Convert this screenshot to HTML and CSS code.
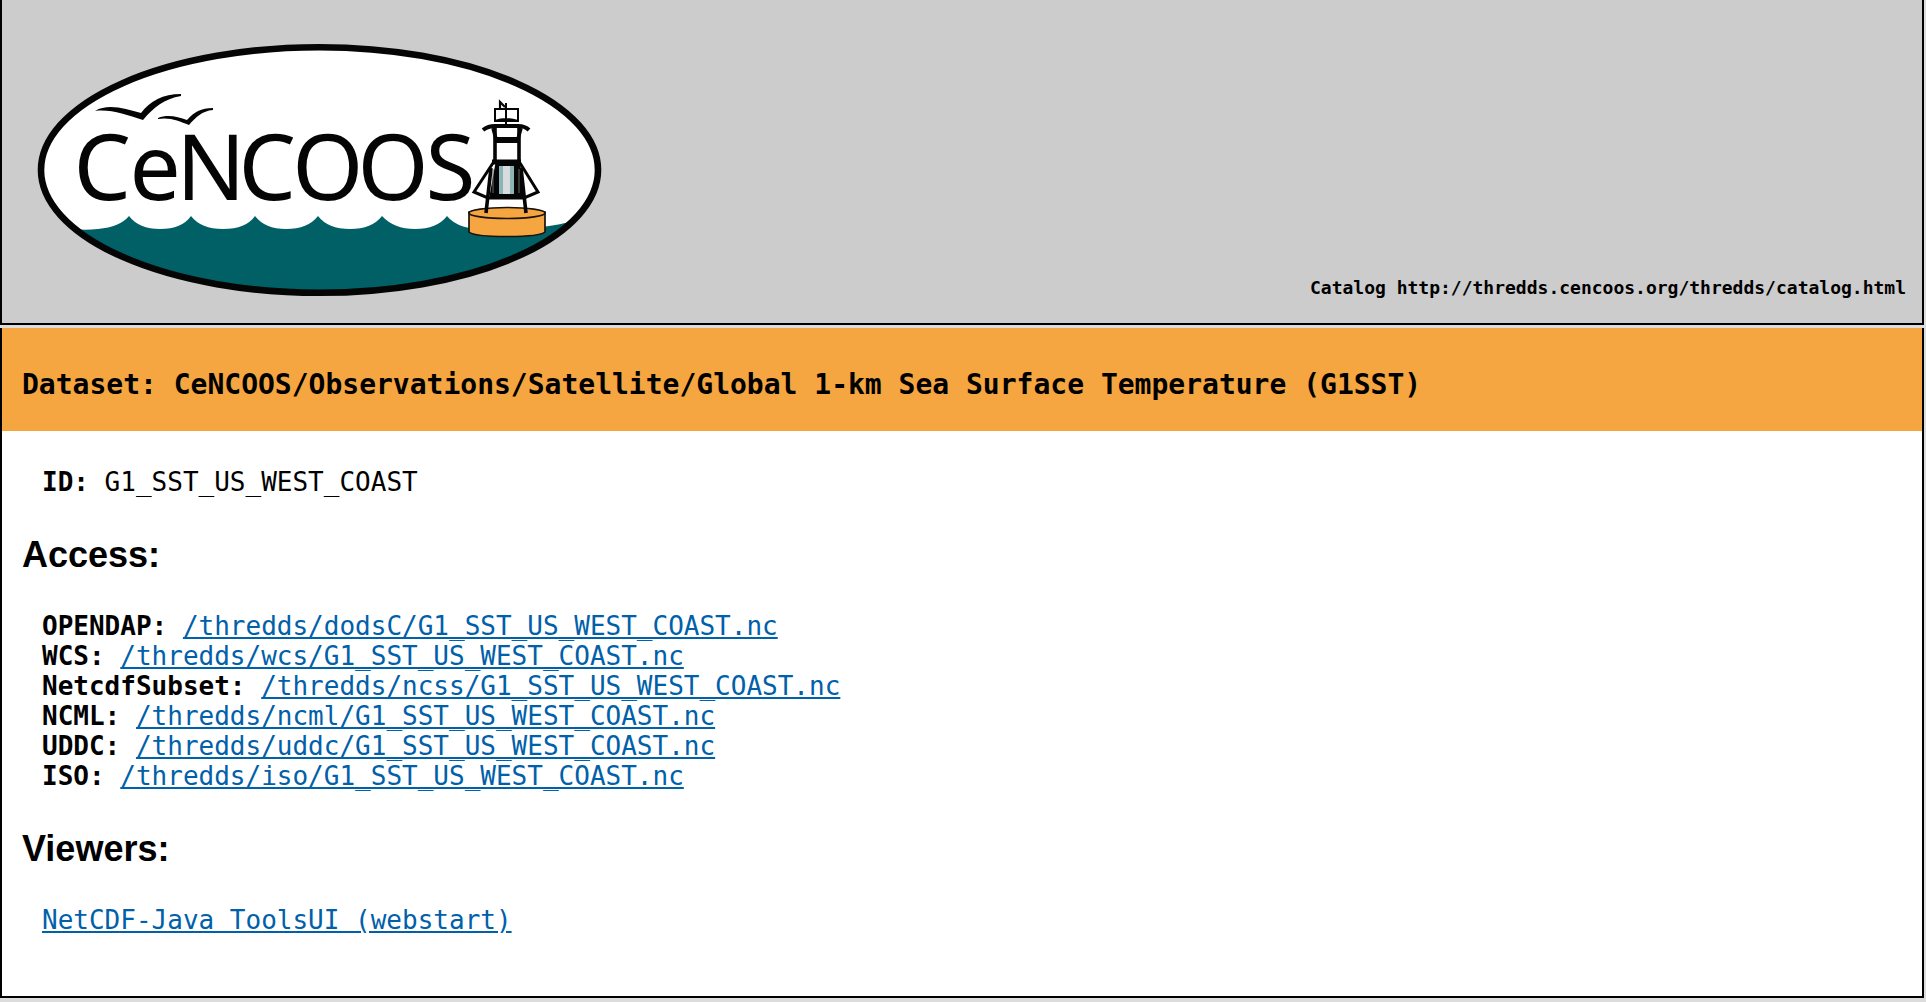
FILE: index.html
```html
<!DOCTYPE html>
<html lang="en">
<head>
<meta charset="utf-8">
<title>Catalog Services</title>
<link rel="stylesheet" href="styles.css">
</head>
<body>
<header class="banner">
  <svg class="logo" viewBox="30 36 580 268" role="img" aria-label="CeNCOOS">
    <defs><clipPath id="oval"><ellipse cx="319.5" cy="170" rx="279" ry="123"/></clipPath></defs>
    <ellipse cx="319.5" cy="170" rx="278.5" ry="122.8" fill="#fff"/>
    <g clip-path="url(#oval)">
      <path fill="#006066" d="M30 222Q50 228 66 228Q82 231 98 229Q120 227 129 216Q139 229 160 229Q182 229 191 216Q201 229 223 229Q246 229 255 216Q265 229 286 229Q308 229 318 216Q328 229 350 229Q372 229 382 216Q394 229 415 229Q437 229 447 216Q458 230 490 230Q540 229 565 223L610 215V310H30Z"/>
    </g>
    <ellipse cx="319.5" cy="170" rx="278.5" ry="122.8" fill="none" stroke="#050505" stroke-width="6.6"/>
    <path fill="#050505" d="M95 111C108 103 126 109 141 113C150 101 163 94 181 94V96C164 99 154 107 143 120C126 115 111 109 95 111ZM158 118C168 114 178 117 187 120C194 112 201 108 213 108V110C202 111 196 117 189 125C179 121 170 117 158 119Z"/>
    <text class="wordmark" x="73.500 129.500 176.300 238.400 292.200 357.500 425.500" y="199.500">CeNCOOS</text>
    <g fill="#f5a641" stroke="#1c120b" stroke-width="1.7">
      <path d="M469 212V232C475 238 539 238 545 232V212Z"/>
      <ellipse cx="507" cy="213" rx="38" ry="5.5"/>
    </g>
    <path fill="#fff" d="M494 129H520V160H522L538 191L522 197H491L475 191L492 160H494Z"/>
    <path fill="#050505" d="M496 160H520L524 199H489Z"/>
    <path fill="#8bb4b5" d="M499 166H514V194H499Z"/>
    <path fill="#d8dcdf" d="M503 166H510V194H503Z"/>
    <g fill="none" stroke="#050505" stroke-width="3.6">
      <path d="M486 213L491 168M526 213L521 168M495 128V163M519 128V163"/>
      <path d="M493 163L474 192L488 198H524L538 192L520 163" stroke-width="3"/>
      <path d="M492 162H521" stroke-width="5"/>
      <path d="M494 140H520" stroke-width="6"/>
      <path d="M493 128L496 139M521 128L518 139"/>
      <path d="M483 130Q488 126 495 126H518Q525 126 529 130" stroke-width="4"/>
      <path d="M506 103V126M495 109H518V121H495ZM495 121Q506 117 518 121" stroke-width="2"/>
      <path d="M500 109V102L505 107" stroke-width="2.2"/>
      <path d="M493 169V193M519 169V193" stroke="#686868" stroke-width="1"/>
    </g>
  </svg>
  <div class="catalog">Catalog http://thredds.cencoos.org/thredds/catalog.html</div>
</header>
<main class="dataset">
  <h2 class="title">Dataset: CeNCOOS/Observations/Satellite/Global 1-km Sea Surface Temperature (G1SST)</h2>
  <ul class="list"><li><b>ID:</b> G1_SST_US_WEST_COAST</li></ul>
  <h3 class="section">Access:</h3>
  <ul class="list">
    <li><b>OPENDAP:</b> <a href="#">/thredds/dodsC/G1_SST_US_WEST_COAST.nc</a></li>
    <li><b>WCS:</b> <a href="#">/thredds/wcs/G1_SST_US_WEST_COAST.nc</a></li>
    <li><b>NetcdfSubset:</b> <a href="#">/thredds/ncss/G1_SST_US_WEST_COAST.nc</a></li>
    <li><b>NCML:</b> <a href="#">/thredds/ncml/G1_SST_US_WEST_COAST.nc</a></li>
    <li><b>UDDC:</b> <a href="#">/thredds/uddc/G1_SST_US_WEST_COAST.nc</a></li>
    <li><b>ISO:</b> <a href="#">/thredds/iso/G1_SST_US_WEST_COAST.nc</a></li>
  </ul>
  <h3 class="section">Viewers:</h3>
  <ul class="list"><li><a href="#">NetCDF-Java ToolsUI (webstart)</a></li></ul>
</main>
</body>
</html>
```
FILE: styles.css
```css
* { box-sizing: border-box; }
body {
  margin: 0;
  padding-right: 2px;
  background: #dcdcdc;
  color: #000;
  font: 26px/30px "DejaVu Sans Mono", monospace;
}
.banner {
  display: flex;
  justify-content: space-between;
  align-items: flex-end;
  height: 325px;
  padding: 0 16px 19px 28px;
  background: #ccc;
  border: solid #000;
  border-width: 0 2px 2px;
}
.logo { width: 580px; height: 268px; }
.wordmark { font: 91px "Noto Sans", sans-serif; fill: #050505; }
.catalog { padding-bottom: 6px; font-size: 18px; line-height: 21px; font-weight: bold; }
.dataset {
  height: 670px;
  margin-top: 3px;
  background: #fff;
  border: solid #000;
  border-width: 0 2px 2px;
}
.title {
  height: 103px;
  margin: 0 0 36px;
  padding: 40px 20px 0;
  background: #f5a641;
  font-size: 28px;
  line-height: 33px;
}
.section {
  margin: 37px 20px 36px;
  font: bold 36px/41px "Liberation Sans", sans-serif;
}
.list { margin: 0; padding: 0 40px; list-style: none; }
a { color: #0060a9; }
```
